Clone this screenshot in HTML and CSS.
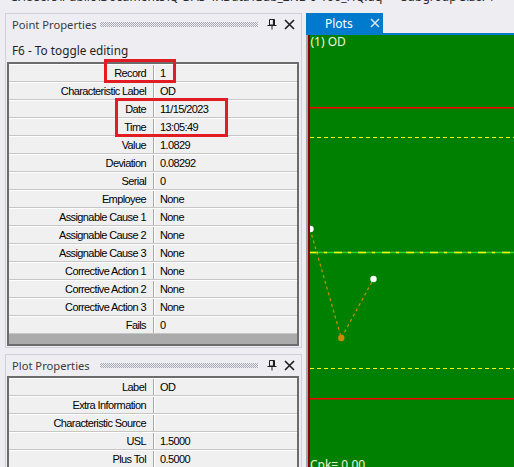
FILE: index.html
```html
<!DOCTYPE html>
<html>
<head>
<meta charset="utf-8">
<link rel="stylesheet" href="styles.css">
</head>
<body>
<div class="titlebar"><span class="title">C:\Users\Public\Documents\Q-DAS 4.\Data\Gdb_2NB 0-Yoo_HQ.dq      Subgroup Size: 1      Record</span></div>
<div class="main">
  <div class="left">
    <section class="panel p1">
      <div class="ph">
        <span class="pt">Point Properties</span>
        <span class="grip"></span>
        <svg class="pin" width="11" height="11" viewBox="0 0 11 11"><path d="M2.5 0.5h5v5.5h-5z" fill="none" stroke="#1e1e1e" stroke-width="1"/><path d="M6.5 0.5v5.5" stroke="#1e1e1e" stroke-width="1.2"/><path d="M0.5 6.5h9" stroke="#1e1e1e" stroke-width="1"/><path d="M5 6.5v4" stroke="#1e1e1e" stroke-width="1"/></svg>
        <svg class="cls" width="11" height="11" viewBox="0 0 11 11"><path d="M1 1L10 10M10 1L1 10" stroke="#1e1e1e" stroke-width="1.6"/></svg>
      </div>
      <div class="hint">F6 - To toggle editing</div>
      <div class="grid">
        <div class="row"><div class="k">Record</div><div class="v">1</div></div>
        <div class="row"><div class="k">Characteristic Label</div><div class="v">OD</div></div>
        <div class="row"><div class="k">Date</div><div class="v">11/15/2023</div></div>
        <div class="row"><div class="k">Time</div><div class="v">13:05:49</div></div>
        <div class="row"><div class="k">Value</div><div class="v">1.0829</div></div>
        <div class="row"><div class="k">Deviation</div><div class="v">0.08292</div></div>
        <div class="row"><div class="k">Serial</div><div class="v">0</div></div>
        <div class="row"><div class="k">Employee</div><div class="v">None</div></div>
        <div class="row"><div class="k">Assignable Cause 1</div><div class="v">None</div></div>
        <div class="row"><div class="k">Assignable Cause 2</div><div class="v">None</div></div>
        <div class="row"><div class="k">Assignable Cause 3</div><div class="v">None</div></div>
        <div class="row"><div class="k">Corrective Action 1</div><div class="v">None</div></div>
        <div class="row"><div class="k">Corrective Action 2</div><div class="v">None</div></div>
        <div class="row"><div class="k">Corrective Action 3</div><div class="v">None</div></div>
        <div class="row"><div class="k">Fails</div><div class="v">0</div></div>
        <div class="gfoot"></div>
      </div>
    </section>
    <section class="panel p2">
      <div class="ph">
        <span class="pt">Plot Properties</span>
        <span class="grip"></span>
        <svg class="pin" width="11" height="11" viewBox="0 0 11 11"><path d="M2.5 0.5h5v5.5h-5z" fill="none" stroke="#1e1e1e" stroke-width="1"/><path d="M6.5 0.5v5.5" stroke="#1e1e1e" stroke-width="1.2"/><path d="M0.5 6.5h9" stroke="#1e1e1e" stroke-width="1"/><path d="M5 6.5v4" stroke="#1e1e1e" stroke-width="1"/></svg>
        <svg class="cls" width="11" height="11" viewBox="0 0 11 11"><path d="M1 1L10 10M10 1L1 10" stroke="#1e1e1e" stroke-width="1.6"/></svg>
      </div>
      <div class="grid">
        <div class="row"><div class="k">Label</div><div class="v">OD</div></div>
        <div class="row"><div class="k">Extra Information</div><div class="v"></div></div>
        <div class="row"><div class="k">Characteristic Source</div><div class="v"></div></div>
        <div class="row"><div class="k">USL</div><div class="v">1.5000</div></div>
        <div class="row"><div class="k">Plus Tol</div><div class="v">0.5000</div></div>
      </div>
    </section>
  </div>
  <div class="right">
    <div class="tabs">
      <div class="tab"><span>Plots</span><svg class="tabx" width="10" height="10" viewBox="0 0 10 10"><path d="M1 1L9 9M9 1L1 9" stroke="#d6e9f7" stroke-width="1.5"/></svg></div>
    </div>
    <div class="tabline"></div>
    <div class="plot">
      <div class="canvas">
        <svg class="chart" width="204" height="432" viewBox="0 0 204 432">
          <text x="0.5" y="11" class="lbl">(1) OD</text>
          <line x1="0" y1="72.7" x2="204" y2="72.7" stroke="#ff0000" stroke-width="1.4"/>
          <line x1="0" y1="102.5" x2="204" y2="102.5" stroke="#ffff00" stroke-width="1" stroke-dasharray="4 3"/>
          <line x1="0" y1="217.5" x2="204" y2="217.5" stroke="#2fd42f" stroke-width="1.3"/>
          <line x1="0" y1="217.5" x2="204" y2="217.5" stroke="#ffff00" stroke-width="1.3" stroke-dasharray="8 6 3 7"/>
          <line x1="0" y1="333.5" x2="204" y2="333.5" stroke="#ffff00" stroke-width="1" stroke-dasharray="4 3"/>
          <line x1="0" y1="363.7" x2="204" y2="363.7" stroke="#ff0000" stroke-width="1.4"/>
          <polyline points="0,194 31.3,303 63.5,244" fill="none" stroke="#d08c00" stroke-width="1.2" stroke-dasharray="3 3"/>
          <circle cx="0.5" cy="194" r="3.2" fill="#ffffff"/>
          <circle cx="31.3" cy="303" r="3.2" fill="#cc8800"/>
          <circle cx="63.5" cy="244" r="3.2" fill="#ffffff"/>
          <text x="0" y="434" class="lbl">Cpk= 0.00</text>
        </svg>
      </div>
    </div>
  </div>
</div>
<div class="mark m1"></div>
<div class="mark m2"></div>
</body>
</html>
```
FILE: styles.css
```css
html, body {
  margin: 0;
  padding: 0;
}
body {
  width: 514px;
  height: 467px;
  overflow: hidden;
  background: #eeeef2;
  font-family: "Noto Sans", "Open Sans", sans-serif;
  color: #1e1e1e;
  position: relative;
}
.titlebar {
  height: 13px;
  overflow: hidden;
}
.title {
  display: block;
  margin-top: -10px;
  margin-left: 10px;
  font-size: 12px;
  line-height: 14px;
  white-space: pre;
  color: #2b2b2b;
}
.main {
  display: flex;
  height: 454px;
}
.left {
  width: 306px;
  flex: none;
  padding-left: 5px;
  box-sizing: border-box;
}
.panel {
  width: 297px;
  box-sizing: border-box;
  border: 1px solid #cfd0dc;
  border-bottom: none;
  background: #eeeef2;
}
.p1 {
  height: 335px;
  border-bottom: 1px solid #cfd0dc;
}
.p2 {
  margin-top: 6px;
  height: 120px;
}
.ph {
  height: 21px;
  display: flex;
  align-items: center;
  padding-left: 6px;
}
.pt {
  font-size: 11.2px;
  color: #3a3a3a;
  width: 88px;
  white-space: nowrap;
  flex: none;
}
.grip {
  width: 158px;
  height: 5px;
  flex: none;
  background-image: repeating-conic-gradient(#a9a9b4 0 25%, transparent 0 50%);
  background-size: 2px 2px;
}
.pin {
  margin-left: 9px;
  flex: none;
}
.cls {
  margin-left: 6px;
  flex: none;
}
.hint {
  height: 27px;
  font-size: 11.8px;
  line-height: 14px;
  padding-left: 6px;
  padding-top: 8px;
  box-sizing: border-box;
  color: #1e1e1e;
}
.grid {
  margin-left: 1px;
  width: 292px;
  border: 2px solid #6c6c6c;
  border-bottom: 2px solid #6c6c6c;
  box-sizing: border-box;
  background: #f0f0f0;
  font-family: "Liberation Sans", Arial, sans-serif;
  font-size: 11px;
  letter-spacing: -0.6px;
  color: #000;
}
.p2 .grid {
  border-bottom: none;
}
.row {
  display: flex;
  height: 18px;
  box-sizing: border-box;
  border-top: 1px solid #ffffff;
  border-bottom: 1px solid #c6c6c6;
  line-height: 16px;
}
.k {
  width: 145px;
  flex: none;
  box-sizing: border-box;
  text-align: right;
  padding-right: 7px;
  border-right: 1px solid #a9a9a9;
  white-space: nowrap;
}
.v {
  flex: 1;
  border-left: 1px solid #ffffff;
  padding-left: 5px;
  white-space: nowrap;
}
.gfoot {
  height: 10px;
  background: #ababab;
}
.right {
  flex: 1;
  display: flex;
  flex-direction: column;
  min-width: 0;
}
.tabs {
  height: 20px;
  display: flex;
  flex: none;
}
.tab {
  width: 77px;
  background: #007acc;
  color: #ffffff;
  font-size: 12px;
  display: flex;
  align-items: center;
  padding-left: 19px;
  box-sizing: border-box;
}
.tabx {
  margin-left: 17px;
}
.tabline {
  height: 2px;
  background: #007acc;
  flex: none;
}
.plot {
  flex: 1;
  display: flex;
  border-left: 2px solid #a3a3ab;
}
.canvas {
  flex: 1;
  border-left: 2px solid #8e0000;
  background: #008000;
  overflow: hidden;
}
.chart {
  display: block;
}
.lbl {
  font-family: "Noto Sans", "Open Sans", sans-serif;
  font-size: 12px;
  fill: #f4f4dc;
}
.mark {
  position: absolute;
  border: 3px solid #e31b23;
  box-sizing: border-box;
}
.m1 {
  left: 104px;
  top: 59px;
  width: 72px;
  height: 24px;
}
.m2 {
  left: 115px;
  top: 98px;
  width: 113px;
  height: 39px;
}
```
